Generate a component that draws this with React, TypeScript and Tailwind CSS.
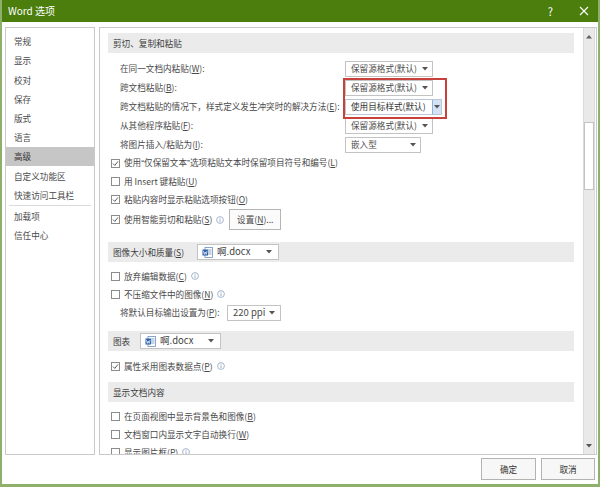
import React from "react"

const FONT = { fontFamily: '"Noto Sans CJK SC", "Noto Sans", sans-serif' }

// small down arrow used by every combo box
function Caret() {
  return (
    <svg width="6" height="4" viewBox="0 0 6 4" className="shrink-0">
      <polygon points="0,0 6,0 3,3.5" fill="#555" />
    </svg>
  )
}

function Info() {
  return (
    <svg width="8" height="8" viewBox="0 0 8 8" className="ml-[4px] shrink-0">
      <circle cx="4" cy="4" r="3.4" fill="none" stroke="#8ea3c2" strokeWidth="0.8" />
      <line x1="4" y1="3.4" x2="4" y2="6" stroke="#8ea3c2" strokeWidth="0.9" />
      <circle cx="4" cy="2.2" r="0.5" fill="#8ea3c2" />
    </svg>
  )
}

function DocIcon() {
  return (
    <svg width="11" height="11" viewBox="0 0 11 11" className="shrink-0">
      <rect x="3" y="0.5" width="7.5" height="10" fill="#fff" stroke="#6b8fc0" strokeWidth="0.8" />
      <line x1="6" y1="3" x2="9.5" y2="3" stroke="#6b8fc0" strokeWidth="0.8" />
      <line x1="6" y1="5" x2="9.5" y2="5" stroke="#6b8fc0" strokeWidth="0.8" />
      <line x1="6" y1="7" x2="9.5" y2="7" stroke="#6b8fc0" strokeWidth="0.8" />
      <rect x="0.5" y="2.5" width="5.5" height="6" fill="#2b5fa8" />
      <polyline points="1.4,3.8 2.3,7.4 3.25,5 4.2,7.4 5.1,3.8" fill="none" stroke="#fff" strokeWidth="0.7" />
    </svg>
  )
}

function Check({ on }: { on?: boolean }) {
  return (
    <div className="w-[9px] h-[9px] border border-[#8c8c8c] bg-white flex items-center justify-center shrink-0">
      {on && (
        <svg width="7" height="7" viewBox="0 0 7 7">
          <polyline points="1,3.6 2.8,5.4 6,1.4" fill="none" stroke="#4a4a4a" strokeWidth="0.9" />
        </svg>
      )}
    </div>
  )
}

function Acc({ k }: { k: string }) {
  return (
    <>
      (<span className="underline underline-offset-1">{k}</span>)
    </>
  )
}

// proportional quote marks, as the dialog font draws them
function Q({ c }: { c: string }) {
  return <span className="font-['Liberation_Sans',sans-serif]">{c}</span>
}

function CheckRow({ on, children, info }: { on?: boolean; children: React.ReactNode; info?: boolean }) {
  return (
    <div className="flex items-center h-[18px] pl-[11px]">
      <Check on={on} />
      <span className="ml-[4px] whitespace-nowrap">{children}</span>
      {info && <Info />}
    </div>
  )
}

function SectionBar({ children, className }: { children: React.ReactNode; className?: string }) {
  return (
    <div className={`flex items-center h-5 ml-2 mr-[9px] bg-[#ebebeb] pl-[5px] text-[#3e3e3e] ${className ?? ""}`}>
      {children}
    </div>
  )
}

const navItems = ["常规", "显示", "校对", "保存", "版式", "语言", "高级", "自定义功能区", "快速访问工具栏"]

export default function App() {
  return (
    <div
      style={FONT}
      className="w-[600px] h-[487px] bg-white flex flex-col border-x-2 border-b-[3px] border-[#8fb06a] text-[8.6px] leading-none text-[#4a4a4a] overflow-hidden"
    >
      {/* title bar */}
      <div className="h-[22px] -mx-[2px] bg-[#4b7e0c] flex items-center text-white shrink-0">
        <span className="pl-[8px] text-[10px] flex-1">Word 选项</span>
        <span className="text-[11px] mr-[26px]">?</span>
        <svg width="10" height="10" viewBox="0 0 10 10" className="mr-[11px]">
          <line x1="1" y1="1" x2="9" y2="9" stroke="#fff" strokeWidth="1.1" />
          <line x1="9" y1="1" x2="1" y2="9" stroke="#fff" strokeWidth="1.1" />
        </svg>
      </div>

      <div className="flex mt-[5px] pl-[3px] gap-[4px] h-[428px] shrink-0">
        {/* left navigation */}
        <div className="w-[90px] border border-[#c9c9c9] pt-[4px] flex flex-col">
          {navItems.map((n) => (
            <div
              key={n}
              className={`h-[19.2px] flex items-center pl-2 ${n === "高级" ? "bg-[#c6c6c6] text-[#333]" : ""}`}
            >
              {n}
            </div>
          ))}
          <div className="h-px bg-[#dcdcdc] mx-[3px] mb-[1px]" />
          <div className="h-[19.2px] flex items-center pl-2">加载项</div>
          <div className="h-[19.2px] flex items-center pl-2">信任中心</div>
        </div>

        {/* options panel */}
        <div className="w-[498px] border border-[#c9c9c9] flex">
          <div className="flex-1 overflow-hidden pt-[5px]">
            <SectionBar>剪切、复制和粘贴</SectionBar>

            <div className="relative mt-[6px]">
              <div className="flex flex-col">
                {[
                  ["在同一文档内粘贴", "W", "保留源格式(默认)", "w-[88px]"],
                  ["跨文档粘贴", "B", "保留源格式(默认)", "w-[88px]"],
                  ["跨文档粘贴的情况下，样式定义发生冲突时的解决方法", "E", "使用目标样式(默认)", "w-[97px]"],
                  ["从其他程序粘贴", "F", "保留源格式(默认)", "w-[88px]"],
                  ["将图片插入/粘贴为", "I", "嵌入型", "w-[76px]"],
                ].map(([label, k, val, w], i) => (
                  <div key={label} className="flex items-center h-[19px] pl-5">
                    <span className="w-[225px] whitespace-nowrap">
                      {label}
                      <Acc k={k} />:
                    </span>
                    {i === 2 ? (
                      <div className={`${w} h-4 flex items-center border border-[#b9c6d6] bg-white`}>
                        <span className="flex-1 pl-[5px] text-[#333]">{val}</span>
                        <div className="w-[9px] h-full bg-[#d3e3f4] border-l border-[#8db5e0] flex items-center justify-center">
                          <Caret />
                        </div>
                      </div>
                    ) : (
                      <div className={`${w} h-4 flex items-center border border-[#c3c3c3] bg-white pr-[4px]`}>
                        <span className="flex-1 pl-[5px]">{val}</span>
                        <Caret />
                      </div>
                    )}
                  </div>
                ))}
              </div>
              {/* red annotation box */}
              <div className="absolute left-[243px] top-[19px] w-[104px] h-[41px] border-2 border-[#c8413a] pointer-events-none" />
            </div>

            <CheckRow on>
              使用<Q c="“" />仅保留文本<Q c="”" />选项粘贴文本时保留项目符号和编号<Acc k="L" />
            </CheckRow>
            <CheckRow>
              用 Insert 键粘贴<Acc k="U" />
            </CheckRow>
            <CheckRow on>
              粘贴内容时显示粘贴选项按钮<Acc k="O" />
            </CheckRow>
            <div className="flex items-center h-[23px] pl-[11px]">
              <Check on />
              <span className="ml-[4px] whitespace-nowrap">
                使用智能剪切和粘贴<Acc k="S" />
              </span>
              <Info />
              <div className="ml-[5px] w-[52px] h-[21px] border border-[#b5b5b5] bg-[#fbfbfb] flex items-center justify-center">
                设置<Acc k="N" />...
              </div>
            </div>

            <SectionBar className="mt-[11px]">
              <span className="w-[84px]">
                图像大小和质量<Acc k="S" />
              </span>
              <div className="w-[82px] h-4 flex items-center border border-[#c3c3c3] bg-white pl-[4px] pr-[6px]">
                <DocIcon />
                <span className="flex-1 pl-[4px] text-[9.5px]">啊.docx</span>
                <Caret />
              </div>
            </SectionBar>

            <div className="mt-[5px]">
              <CheckRow info>
                放弃编辑数据<Acc k="C" />
              </CheckRow>
              <CheckRow info>
                不压缩文件中的图像<Acc k="N" />
              </CheckRow>
              <div className="flex items-center h-[19px] pl-5">
                <span className="w-[107px] whitespace-nowrap">
                  将默认目标输出设置为<Acc k="P" />:
                </span>
                <div className="w-[54px] h-4 flex items-center border border-[#c3c3c3] bg-white pr-[5px]">
                  <span className="flex-1 pl-[5px] text-[9.5px]">220 ppi</span>
                  <Caret />
                </div>
              </div>
            </div>

            <SectionBar className="mt-[9px]">
              <span className="w-[27px]">图表</span>
              <div className="w-[81px] h-4 flex items-center border border-[#c3c3c3] bg-white pl-[4px] pr-[6px]">
                <DocIcon />
                <span className="flex-1 pl-[4px] text-[9.5px]">啊.docx</span>
                <Caret />
              </div>
            </SectionBar>

            <div className="mt-[6px]">
              <CheckRow on info>
                属性采用图表数据点<Acc k="P" />
              </CheckRow>
            </div>

            <SectionBar className="mt-[7px]">显示文档内容</SectionBar>

            <div className="mt-[5px]">
              <CheckRow>
                在页面视图中显示背景色和图像<Acc k="B" />
              </CheckRow>
              <CheckRow>
                文档窗口内显示文字自动换行<Acc k="W" />
              </CheckRow>
              <CheckRow info>
                显示图片框<Acc k="P" />
              </CheckRow>
            </div>
          </div>

          {/* scrollbar */}
          <div className="w-[12px] mr-px bg-[#e9e9e9] border-x border-[#dadada] flex flex-col items-stretch">
            <div className="h-[17px] flex items-center justify-center">
              <svg width="6" height="4" viewBox="0 0 6 4">
                <polygon points="0,3.5 6,3.5 3,0" fill="#606060" />
              </svg>
            </div>
            <div className="mt-[77px] h-[68px] bg-white border border-[#c2c2c2]" />
            <div className="flex-1" />
            <div className="h-[17px] flex items-center justify-center">
              <Caret />
            </div>
          </div>
        </div>
      </div>

      {/* footer buttons */}
      <div className="flex-1 flex justify-end items-start pt-[3px] pr-[3px] gap-[5px] text-[#333]">
        <div className="w-[55px] h-[22px] border border-[#b3b3b3] bg-[#f7f7f7] flex items-center justify-center">确定</div>
        <div className="w-[54px] h-[22px] border border-[#b3b3b3] bg-[#f7f7f7] flex items-center justify-center">取消</div>
      </div>
    </div>
  )
}
